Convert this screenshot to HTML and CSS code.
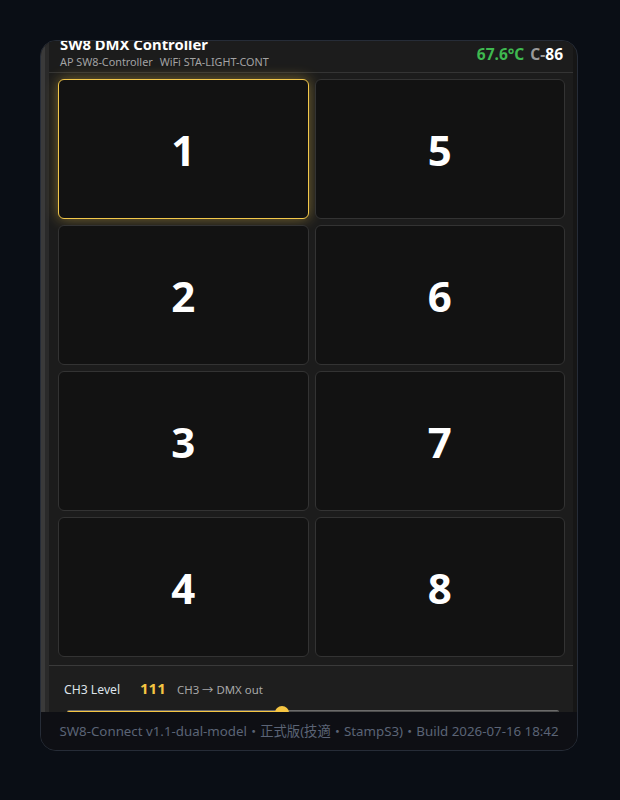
FILE: index.html
```html
<!DOCTYPE html>
<html lang="ja">
<head>
    <meta charset="UTF-8">
    <meta name="viewport" content="width=device-width, initial-scale=1.0">
    <title>SW8 DMX Controller</title>
    <link rel="stylesheet" href="styles.css">
</head>
<body>
    <div class="device">
        <div class="screen">
            <div class="app">
                <header class="topbar">
                    <div class="brand">
                        <h1>SW8 DMX Controller</h1>
                        <div class="net">
                            <span>AP SW8-Controller</span>
                            <span>WiFi STA-LIGHT-CONT</span>
                        </div>
                    </div>
                    <div class="stats">
                        <span class="temp">67.6°C</span>
                        <span class="rssi"><span class="rssi-label">C-</span>86</span>
                    </div>
                </header>

                <div class="grid">
                    <button class="sw active">1</button>
                    <button class="sw">5</button>
                    <button class="sw">2</button>
                    <button class="sw">6</button>
                    <button class="sw">3</button>
                    <button class="sw">7</button>
                    <button class="sw">4</button>
                    <button class="sw">8</button>
                </div>

                <div class="level">
                    <div class="level-row">
                        <span class="level-label">CH3 Level</span>
                        <span class="level-value" id="levelValue">111</span>
                        <span class="level-note">CH3 → DMX out</span>
                    </div>
                    <input type="range" class="slider" id="level" min="0" max="255" value="111" style="--pct: 43.5%">
                </div>
            </div>
        </div>
        <footer class="footer">SW8-Connect v1.1-dual-model・正式版(技適・StampS3)・Build 2026-07-16 18:42</footer>
    </div>
</body>
</html>
```

FILE: styles.css
```css
* {
    margin: 0;
    padding: 0;
    box-sizing: border-box;
}
body {
    font-family: 'Noto Sans', 'Noto Sans CJK JP', sans-serif;
    background: #0a0e15;
    color: #eee;
    min-height: 100vh;
}
.device {
    width: 538px;
    height: 711px;
    margin: 40px 0 0 40px;
    background: #161616;
    border: 1px solid #262c37;
    border-radius: 16px;
    overflow: hidden;
    display: flex;
    flex-direction: column;
}
.screen {
    flex: 1;
    overflow: hidden;
    margin-right: 4px;
    padding-left: 4px;
    background: #1c1c1c;
    border-left: 4px solid #3a3a3a;
    box-shadow: inset 4px 0 0 #2a2a2a;
}
/* page is scrolled down a little */
.app {
    margin-top: -15px;
}
.topbar {
    display: flex;
    justify-content: space-between;
    align-items: center;
    padding: 8px 10px 2px 11px;
    border-bottom: 1px solid #343434;
}
.topbar h1 {
    font-size: 14.8px;
    font-weight: 700;
    line-height: 20px;
    color: #fff;
}
.net {
    display: flex;
    gap: 7px;
    font-size: 10.8px;
    line-height: 16px;
    color: #a3a3a3;
}
.stats {
    font-size: 15.5px;
    font-weight: 700;
    margin-top: 4px;
}
.temp {
    color: #3fb950;
    margin-right: 2px;
}
.rssi {
    color: #fff;
}
.rssi-label {
    color: #9a9a9a;
}
.grid {
    display: grid;
    grid-template-columns: 1fr 1fr;
    grid-auto-rows: 140px;
    gap: 6px;
    padding: 6px 8px 8px 9px;
}
.sw {
    font-family: inherit;
    font-size: 42px;
    font-weight: 700;
    color: #fff;
    background: #121212;
    border: 1px solid #333;
    border-radius: 6px;
    cursor: pointer;
}
.sw.active {
    border-color: #f2c74a;
    box-shadow: 0 0 14px rgba(242, 199, 74, 0.45);
}
.level {
    border-top: 1px solid #3a3a3a;
    background: #1e1e1e;
    padding: 12px 14px 0 15px;
}
.level-row {
    display: flex;
    align-items: baseline;
    height: 20px;
}
.level-label {
    font-size: 12.2px;
    color: #dde3ea;
    width: 76px;
}
.level-value {
    font-size: 15px;
    font-weight: 700;
    color: #f5c542;
    width: 37px;
}
.level-note {
    font-size: 11.4px;
    color: #a8a8a8;
}
.slider {
    -webkit-appearance: none;
    appearance: none;
    display: block;
    width: 492px;
    height: 14px;
    margin: 8px 0 0 3px;
    background: transparent;
}
.slider::-webkit-slider-runnable-track {
    height: 4px;
    border-radius: 2px;
    background: linear-gradient(to right, #f5c542 var(--pct), #4d4d4d var(--pct));
    box-shadow: 0 -1px 0 #6a6a6a;
}
.slider::-webkit-slider-thumb {
    -webkit-appearance: none;
    width: 14px;
    height: 14px;
    margin-top: -5px;
    border-radius: 50%;
    background: #f5c542;
}
.footer {
    height: 38px;
    background: #0e0f14;
    color: #5b6476;
    font-size: 13.3px;
    text-align: center;
    line-height: 38px;
    white-space: nowrap;
}
```
